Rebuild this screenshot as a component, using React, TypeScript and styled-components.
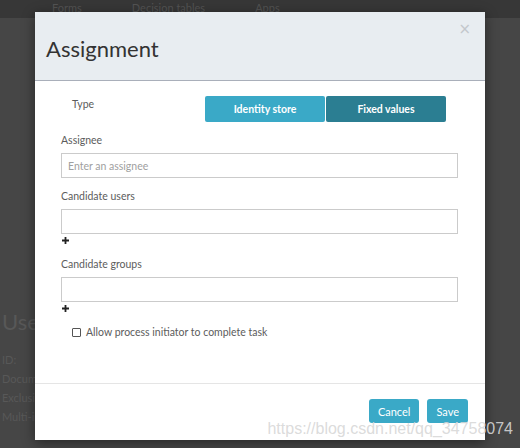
import styled, { createGlobalStyle } from "styled-components";

const GlobalStyle = createGlobalStyle`
  html, body {
    margin: 0;
    padding: 0;
    background: #444;
  }
  * {
    box-sizing: border-box;
  }
`;

const Page = styled.div`
  position: relative;
  width: 520px;
  height: 448px;
  overflow: hidden;
  background: #464646;
  font-family: Lato, "Open Sans", sans-serif;
`;

const NavBar = styled.div`
  height: 18px;
  background: #373737;
  display: flex;
  gap: 50px;
  padding: 1px 0 0 52px;
  font-size: 11px;
  line-height: 13px;
  color: #535353;
`;

const BackText = styled.div`
  display: flex;
  flex-direction: column;
  gap: 6px;
  margin-top: 290px;
  margin-left: 2px;
  color: #585858;
  font-size: 11px;
`;

const BackTitle = styled.div`
  font-size: 22px;
  margin-bottom: 12px;
`;

const Overlay = styled.div`
  position: absolute;
  inset: 0;
  display: flex;
  justify-content: center;
  padding-top: 12px;
`;

const Modal = styled.div`
  width: 450px;
  height: 428px;
  background: #fff;
  display: flex;
  flex-direction: column;
  box-shadow: 0 3px 12px rgba(0, 0, 0, 0.45);
`;

const Header = styled.div`
  position: relative;
  height: 69px;
  background: #e8edf1;
  border-bottom: 1px solid #a9afba;
  padding: 23px 15px 0 11px;
`;

const Title = styled.h1`
  margin: 0;
  font-size: 22px;
  line-height: 28px;
  font-weight: 400;
  color: #333;
`;

const CloseButton = styled.span`
  position: absolute;
  top: 10px;
  right: 14px;
  font-size: 15px;
  line-height: 15px;
  color: #c3c7cc;
  font-family: "DejaVu Sans", sans-serif;
`;

const Body = styled.div`
  flex: 1;
  padding: 15px 27px 0 26px;
`;

const TypeRow = styled.div`
  display: grid;
  grid-template-columns: 144px 1fr;
  margin-bottom: 11px;
`;

const TypeLabel = styled.div`
  padding: 1px 0 0 11px;
  font-size: 10.5px;
  line-height: 14px;
  color: #5c5c5c;
`;

const Toggle = styled.div`
  display: flex;
  gap: 1px;
`;

const ToggleButton = styled.button<{ $active?: boolean }>`
  width: 120px;
  height: 26px;
  border: none;
  border-radius: 2px;
  background: ${(p) => (p.$active ? "#2b7e92" : "#3aa9c7")};
  color: #fff;
  font-family: Lato, sans-serif;
  font-weight: 700;
  font-size: 10.5px;
  padding: 0;
`;

const Field = styled.div`
  margin-bottom: 11px;
`;

const Label = styled.div`
  font-size: 10.5px;
  line-height: 14px;
  color: #5c5c5c;
  margin-bottom: 6px;
`;

const Input = styled.input`
  display: block;
  width: 397px;
  height: 25px;
  border: 1px solid #cbcbcb;
  padding: 0 6px;
  font-family: Lato, sans-serif;
  font-size: 10.5px;
  color: #555;
  &::placeholder {
    color: #a0a0a0;
  }
`;

const AddRow = styled.div`
  height: 12px;
  display: flex;
  align-items: center;
  padding-left: 1px;
`;

const CheckRow = styled.label`
  display: flex;
  align-items: center;
  gap: 5px;
  margin: 10px 0 0 11px;
  font-size: 10.5px;
  line-height: 14px;
  color: #5c5c5c;
`;

const CheckBox = styled.span`
  width: 9px;
  height: 9px;
  border: 1px solid #555;
  border-radius: 1px;
  background: #fff;
`;

const Footer = styled.div`
  border-top: 1px solid #e5e5e5;
  display: flex;
  justify-content: flex-end;
  gap: 8px;
  padding: 15px 17px 17px 0;
`;

const FooterButton = styled.button`
  height: 24px;
  padding: 0 9px;
  border: none;
  border-radius: 3px;
  background: #3aa9c7;
  color: #fff;
  font-family: Lato, sans-serif;
  font-size: 11px;
`;

const Watermark = styled.div`
  position: absolute;
  right: 7px;
  bottom: 11px;
  font-family: "Liberation Sans", Arial, sans-serif;
  font-size: 16px;
  line-height: 16px;
  color: rgba(215, 215, 215, 0.9);
`;

function PlusIcon() {
  return (
    <svg width="7" height="7" viewBox="0 0 7 7">
      <path d="M2.6 0h1.8v2.6H7v1.8H4.4V7H2.6V4.4H0V2.6h2.6z" fill="#222" />
    </svg>
  );
}

export default function App() {
  return (
    <Page>
      <GlobalStyle />
      <NavBar>
        <span>Forms</span>
        <span>Decision tables</span>
        <span>Apps</span>
      </NavBar>
      <BackText>
        <BackTitle>UserC</BackTitle>
        <span>ID:</span>
        <span>Documen</span>
        <span>Exclusive</span>
        <span>Multi-ins</span>
      </BackText>

      <Overlay>
        <Modal>
          <Header>
            <Title>Assignment</Title>
            <CloseButton>×</CloseButton>
          </Header>
          <Body>
            <TypeRow>
              <TypeLabel>Type</TypeLabel>
              <Toggle>
                <ToggleButton>Identity store</ToggleButton>
                <ToggleButton $active>Fixed values</ToggleButton>
              </Toggle>
            </TypeRow>
            <Field>
              <Label>Assignee</Label>
              <Input placeholder="Enter an assignee" />
            </Field>
            <Field>
              <Label>Candidate users</Label>
              <Input />
              <AddRow>
                <PlusIcon />
              </AddRow>
            </Field>
            <Field>
              <Label>Candidate groups</Label>
              <Input />
              <AddRow>
                <PlusIcon />
              </AddRow>
            </Field>
            <CheckRow>
              <CheckBox />
              Allow process initiator to complete task
            </CheckRow>
          </Body>
          <Footer>
            <FooterButton>Cancel</FooterButton>
            <FooterButton>Save</FooterButton>
          </Footer>
        </Modal>
      </Overlay>
      <Watermark>https://blog.csdn.net/qq_34758074</Watermark>
    </Page>
  );
}
